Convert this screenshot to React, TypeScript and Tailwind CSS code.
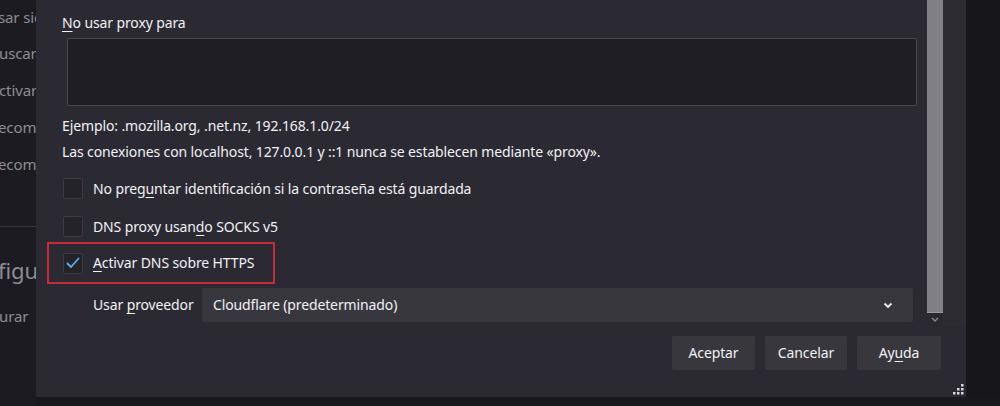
import React from "react";

const font = { fontFamily: '"Noto Sans", "Open Sans", sans-serif' };

function U({ children }: { children: React.ReactNode }) {
  return <span className="underline underline-offset-[3px] decoration-1">{children}</span>;
}

function Checkbox({ checked }: { checked?: boolean }) {
  return (
    <div className="w-[20px] h-[21px] shrink-0 rounded-[2px] border border-[#3d3c43] bg-[#24232a] flex items-center justify-center">
      {checked && (
        <svg width="16" height="14" viewBox="0 0 16 14">
          <path d="M2.5 7.5 L6 11 L13.5 2.5" fill="none" stroke="#5aaef0" strokeWidth="1.8" strokeLinecap="round" strokeLinejoin="round" />
        </svg>
      )}
    </div>
  );
}

export default function App() {
  return (
    <div className="w-[1000px] h-[406px] overflow-hidden bg-[#18171c] flex flex-col text-[14px] tracking-[-0.12px]" style={font}>
      <div className="flex h-[397px]">
        {/* left background strip */}
        <div className="w-[36px] shrink-0 bg-[#1c1b22] overflow-hidden text-[#8e8d93] text-[15px] whitespace-nowrap flex flex-col">
          <div className="mt-[7px] ml-[-2px] leading-[20px]">sar siempre</div>
          <div className="mt-[16px] ml-[-1px] leading-[20px]">uscar</div>
          <div className="mt-[17px] ml-[-1px] leading-[20px]">ctivar</div>
          <div className="mt-[17px] ml-[-2px] leading-[20px]">ecomendar</div>
          <div className="mt-[17px] ml-[-2px] leading-[20px]">ecomendar</div>
          <div className="mt-[52px] h-px bg-[#38373e]" />
          <div className="mt-[29px] ml-[-2px] text-[22px] leading-[28px]">figuración</div>
          <div className="mt-[22px] ml-[-1px] leading-[20px]">urar</div>
        </div>

        {/* dialog */}
        <div className="w-[930px] shrink-0 bg-[#2b2a33] flex flex-col text-[#f1f1f4] relative">
          <div className="flex h-[326px]">
            {/* content */}
            <div className="w-[891px] shrink-0 pl-[26px] flex flex-col">
              <div className="mt-[13px] leading-[20px]"><U>N</U>o usar proxy para</div>
              <div className="mt-[5px] ml-[5px] w-[850px] h-[68px] bg-[#1f1e25] border border-[#48474e] rounded-[2px]" />
              <div className="mt-[10px] leading-[20px]">Ejemplo: .mozilla.org, .net.nz, 192.168.1.0/24</div>
              <div className="mt-[6px] leading-[20px]">Las conexiones con localhost, 127.0.0.1 y ::1 nunca se establecen mediante «proxy».</div>
              <div className="mt-[16px] flex items-center gap-[10px] ml-[1px]">
                <Checkbox />
                <span className="leading-[20px]">No preg<U>u</U>ntar identificación si la contraseña está guardada</span>
              </div>
              <div className="mt-[17px] flex items-center gap-[10px] ml-[1px]">
                <Checkbox />
                <span className="leading-[20px]">DNS proxy usan<U>d</U>o SOCKS v5</span>
              </div>
              <div className="mt-[5px] ml-[-15px] w-[228px] h-[42px] border-2 border-[#c62a3b] flex items-center gap-[10px] pl-[14px]">
                <Checkbox checked />
                <span className="leading-[20px]"><U>A</U>ctivar DNS sobre HTTPS</span>
              </div>
              <div className="mt-[4px] flex items-center ml-[31px]">
                <span className="w-[109px] leading-[20px]">Usar <U>p</U>roveedor</span>
                <div className="w-[711px] h-[34px] bg-[#38373e] rounded-[2px] flex items-center justify-between pl-[11px] pr-[20px]">
                  <span className="leading-[20px]">Cloudflare (predeterminado)</span>
                  <svg width="10" height="7" viewBox="0 0 10 7">
                    <path d="M1.5 1.5 L5 5 L8.5 1.5" fill="none" stroke="#f1f1f4" strokeWidth="1.8" />
                  </svg>
                </div>
              </div>
            </div>
            {/* scrollbar */}
            <div className="w-[16px] shrink-0 flex flex-col">
              <div className="h-[313px] bg-[#807f85] border-b border-[#9a999e]" />
              <div className="h-[13px] bg-[#2a2930] flex items-center justify-center">
                <svg width="8" height="5" viewBox="0 0 8 5">
                  <path d="M1 1 L4 4 L7 1" fill="none" stroke="#8a898f" strokeWidth="1.3" />
                </svg>
              </div>
            </div>
            <div className="flex-1 bg-[#2d2c33]" />
          </div>

          {/* buttons */}
          <div className="mt-[10px] flex justify-end gap-[10px] pr-[25px]">
            <button className="w-[83px] h-[34px] bg-[#38373e] rounded-[2px] leading-[20px]">Aceptar</button>
            <button className="w-[82px] h-[34px] bg-[#38373e] rounded-[2px] leading-[20px]">Cancelar</button>
            <button className="w-[84px] h-[34px] bg-[#38373e] rounded-[2px] leading-[20px]">Ay<U>u</U>da</button>
          </div>

          {/* resize grip */}
          <svg className="absolute right-[2px] bottom-[2px]" width="11" height="11" viewBox="0 0 11 11">
            {[
              [8, 0],
              [4, 4], [8, 4],
              [0, 8], [4, 8], [8, 8],
            ].map(([x, y], i) => (
              <rect key={i} x={x} y={y} width="2.5" height="2.5" fill="#d8d8dc" />
            ))}
          </svg>
        </div>

        <div className="flex-1 bg-[#17161b]" />
      </div>
      <div className="flex-1 flex">
        <div className="w-[36px] bg-[#1c1b22]" />
        <div className="flex-1 bg-[#19181e]" />
      </div>
    </div>
  );
}
